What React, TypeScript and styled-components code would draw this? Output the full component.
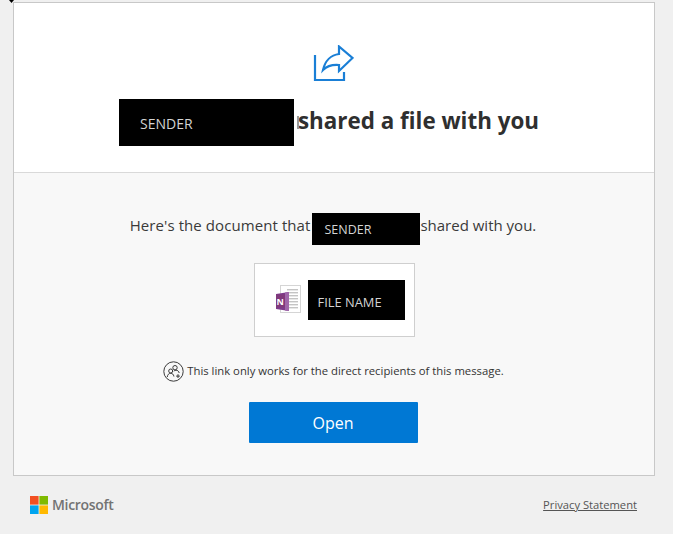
import React from "react";
import styled, { createGlobalStyle } from "styled-components";

const Global = createGlobalStyle`
  html, body { margin: 0; padding: 0; background: #f0f0f0; }
  body { font-family: "Open Sans", "Noto Sans", "Liberation Sans", sans-serif; color: #333; }
`;

const Page = styled.div`
  position: relative;
  width: 673px;
  height: 534px;
  box-sizing: border-box;
  padding: 2px 18px 0 13px;
  overflow: hidden;
`;

const Cursor = styled.svg`
  position: absolute;
  left: 9px;
  top: 0;
`;

const Card = styled.main`
  width: 642px;
  height: 474px;
  box-sizing: border-box;
  border: 1px solid #c8c8c8;
  display: flex;
  flex-direction: column;
`;

const Hero = styled.section`
  flex: none;
  height: 170px;
  box-sizing: border-box;
  background: #fff;
  border-bottom: 1px solid #d9d9d9;
  display: flex;
  flex-direction: column;
  align-items: center;
  padding-top: 42px;
`;

const ShareGlyph = styled.svg`
  flex: none;
  margin-right: 2px;
`;

const HeadingRow = styled.div`
  display: flex;
  align-items: center;
  margin-top: 16px;
  margin-right: 10px;
`;

const Redaction = styled.span<{ $w: number; $h: number; $pad: number; $size: number; $top: number }>`
  flex: none;
  display: flex;
  align-items: center;
  box-sizing: border-box;
  width: ${(p) => p.$w}px;
  height: ${(p) => p.$h}px;
  padding: ${(p) => p.$top}px 0 0 ${(p) => p.$pad}px;
  background: #000;
  color: #d4d4d4;
  font-size: ${(p) => p.$size}px;
  font-weight: 400;
  white-space: nowrap;
`;

const Heading = styled.h1`
  position: relative;
  margin: 0 0 4px 0;
  padding-left: 4px;
  font-size: 22.4px;
  line-height: 32px;
  font-weight: 700;
  color: #2f2f2f;
  white-space: nowrap;

  &::before {
    content: "";
    position: absolute;
    left: 3px;
    top: 11px;
    width: 2px;
    height: 13px;
    background: #9a9a9a;
  }
`;

const Body = styled.section`
  flex: 1;
  background: #f8f8f8;
  display: flex;
  flex-direction: column;
  align-items: center;
  padding-top: 40px;
`;

const Intro = styled.div`
  display: flex;
  align-items: flex-start;
  margin-right: 2px;
  font-size: 15px;
  line-height: 24px;
  color: #3a3a3a;
  white-space: nowrap;
  height: 32px;
`;

const IntroLead = styled.span`
  margin-right: 2px;
  letter-spacing: 0.08px;
`;

const FileCard = styled.div`
  width: 161px;
  height: 74px;
  box-sizing: border-box;
  margin-top: 18px;
  background: #fff;
  border: 1px solid #cfcfcf;
  display: flex;
  align-items: center;
  padding-left: 21px;
  gap: 7px;
`;

const Notice = styled.div`
  display: flex;
  align-items: center;
  gap: 3px;
  margin-top: 23px;
  margin-right: 1px;
  font-size: 11.3px;
  line-height: 22px;
  color: #333;
  white-space: nowrap;
`;

const OpenButton = styled.button`
  width: 169px;
  height: 41px;
  margin-top: 20px;
  margin-right: 2px;
  border: 0;
  border-radius: 1px;
  background: #0078d4;
  color: #fff;
  font-family: inherit;
  font-size: 16px;
`;

const Footer = styled.footer`
  width: 642px;
  display: flex;
  justify-content: space-between;
  align-items: center;
  box-sizing: border-box;
  padding: 19px 18px 0 17px;
`;

const Brand = styled.div`
  display: flex;
  align-items: center;
  gap: 4px;
  font-size: 14px;
  font-weight: 600;
  color: #737373;
  letter-spacing: -0.3px;
`;

const Privacy = styled.a`
  font-size: 11.2px;
  color: #555;
  text-decoration: underline;
`;

const ShareIcon = () => (
  <ShareGlyph width="41" height="38" viewBox="0 0 41 38" fill="none" stroke="#1a7fd6">
    <path d="M2 10V35H31V27" strokeWidth="2.2" />
    <path
      d="M10 25C12 16 18 10 26 9V1.5L39.5 13L26 26V20C20 19.5 14 21 10 25Z"
      strokeWidth="2.2"
      strokeLinejoin="miter"
    />
  </ShareGlyph>
);

const OneNoteIcon = () => (
  <svg width="25" height="30" viewBox="0 0 25 30">
    <rect x="4.5" y="0.5" width="20" height="27" fill="#fff" stroke="#d5d5d5" />
    {[4, 7, 10, 13, 16, 19, 22].map((y) => (
      <rect key={y} x="11" y={y} width="11" height="1.4" fill="#c4c4c4" />
    ))}
    <path d="M0 9L13 7V26L0 24Z" fill="#7d3a8c" />
    <rect x="0" y="9.5" width="9" height="13" fill="#80397b" />
    <path d="M9 7.5L13 7V26L9 25.4Z" fill="#a066aa" />
    <text x="4.2" y="20" fontSize="9" fontWeight="700" fill="#fff" textAnchor="middle" fontFamily="Open Sans, sans-serif">N</text>
  </svg>
);

const PeopleIcon = () => (
  <svg width="21" height="21" viewBox="0 0 21 21" fill="none" stroke="#3a3a3a" strokeWidth="1">
    <circle cx="10.5" cy="10.5" r="9.7" />
    <circle cx="12" cy="6.7" r="2.2" />
    <circle cx="7.7" cy="10" r="2" />
    <path d="M4.3 16C4.5 13.5 6 12.3 7.7 12.3C9.4 12.3 10.6 13.4 10.9 15.5" />
    <path d="M10.8 10.2C11.4 9.5 12.2 9.2 13 9.2C14.6 9.2 15.8 10.2 16.2 12" />
    <path d="M15 13.2V17M13.1 15.1H16.9" />
  </svg>
);

const MsLogo = () => (
  <svg width="18" height="18" viewBox="0 0 18 18">
    <rect width="8.6" height="8.6" fill="#f25022" />
    <rect x="9.4" width="8.6" height="8.6" fill="#7fba00" />
    <rect y="9.4" width="8.6" height="8.6" fill="#00a4ef" />
    <rect x="9.4" y="9.4" width="8.6" height="8.6" fill="#ffb900" />
  </svg>
);

export default function App() {
  return (
    <>
      <Global />
      <Page>
        <Cursor width="5" height="3" viewBox="0 0 5 3">
          <path d="M0 0H5L2.5 3Z" fill="#000" />
        </Cursor>
        <Card>
          <Hero>
            <ShareIcon />
            <HeadingRow>
              <Redaction $w={175} $h={47} $pad={21} $size={14} $top={2}>SENDER</Redaction>
              <Heading>shared a file with you</Heading>
            </HeadingRow>
          </Hero>
          <Body>
            <Intro>
              <IntroLead>Here's the document that</IntroLead>
              <Redaction $w={108} $h={32} $pad={12} $size={12.5} $top={2}>SENDER</Redaction>
              <span>shared with you.</span>
            </Intro>
            <FileCard>
              <OneNoteIcon />
              <Redaction $w={97} $h={40} $pad={10} $size={12.9} $top={4}>FILE NAME</Redaction>
            </FileCard>
            <Notice>
              <PeopleIcon />
              <span>This link only works for the direct recipients of this message.</span>
            </Notice>
            <OpenButton>Open</OpenButton>
          </Body>
        </Card>
        <Footer>
          <Brand>
            <MsLogo />
            Microsoft
          </Brand>
          <Privacy>Privacy Statement</Privacy>
        </Footer>
      </Page>
    </>
  );
}
